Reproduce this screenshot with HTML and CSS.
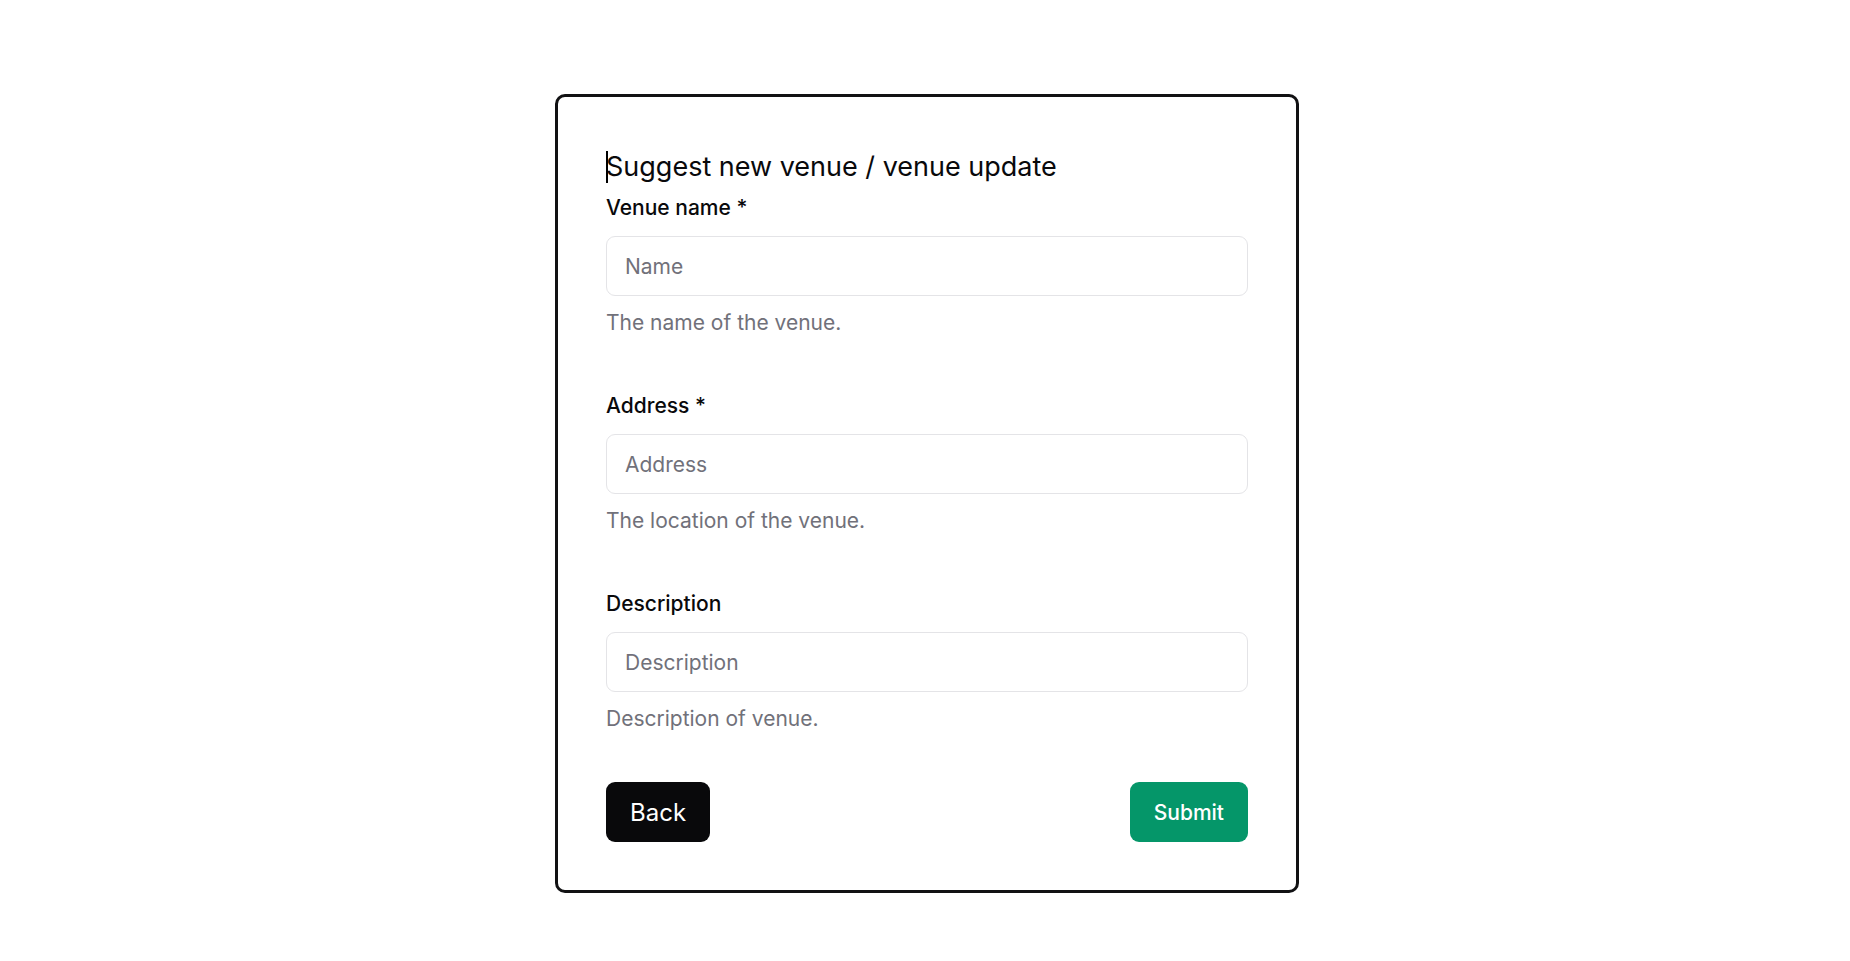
FILE: index.html
```html
<!DOCTYPE html>
<html lang="en">
<head>
<meta charset="utf-8">
<title>Suggest new venue</title>
<link rel="stylesheet" href="styles.css">
</head>
<body>
<main class="page">
  <form class="card">
    <h1 class="title">Suggest new venue / venue update</h1>
    <div class="fields">
      <div class="field">
        <label class="label" for="name">Venue name *</label>
        <input class="input" id="name" type="text" placeholder="Name">
        <p class="helper">The name of the venue.</p>
      </div>
      <div class="field">
        <label class="label" for="address">Address *</label>
        <input class="input" id="address" type="text" placeholder="Address">
        <p class="helper">The location of the venue.</p>
      </div>
      <div class="field">
        <label class="label" for="description">Description</label>
        <input class="input" id="description" type="text" placeholder="Description">
        <p class="helper">Description of venue.</p>
      </div>
    </div>
    <div class="actions">
      <button class="btn btn-back" type="button">Back</button>
      <button class="btn btn-submit" type="submit">Submit</button>
    </div>
  </form>
</main>
</body>
</html>
```

FILE: styles.css
```css
html, body {
  margin: 0;
  background: #ffffff;
}

body {
  font-family: Inter, "Noto Sans", "Liberation Sans", sans-serif;
  color: #09090b;
}

.page {
  display: flex;
  justify-content: center;
  padding: 94px 0 0 4px;
}

.card {
  width: 744px;
  box-sizing: border-box;
  border: 3px solid #111113;
  border-radius: 10px;
  padding: 49px 48px 48px;
  background: #ffffff;
}

.title {
  position: relative;
  margin: 0 0 4px;
  font-size: 27px;
  line-height: 42px;
  font-weight: 400;
  color: #09090b;
}

.title::before {
  content: "";
  position: absolute;
  left: 0;
  top: 5px;
  width: 2px;
  height: 32px;
  background: #000000;
}

.fields {
  display: flex;
  flex-direction: column;
  gap: 52px;
}

.field {
  display: flex;
  flex-direction: column;
}

.label {
  font-size: 21px;
  line-height: 30px;
  font-weight: 500;
  color: #09090b;
  padding-top: 1px;
  margin-bottom: 13px;
}

.input {
  display: block;
  width: 100%;
  height: 60px;
  box-sizing: border-box;
  border: 1px solid #e4e4e7;
  border-radius: 9px;
  padding: 0 18px;
  font-family: inherit;
  font-size: 21px;
  color: #09090b;
  background: #ffffff;
  outline: none;
}

.input::placeholder {
  color: #71717a;
}

.helper {
  margin: 12px 0 0;
  font-size: 21px;
  line-height: 30px;
  color: #71717a;
}

.actions {
  display: flex;
  justify-content: space-between;
  margin-top: 48px;
}

.btn {
  height: 60px;
  padding: 0 24px;
  border: none;
  border-radius: 9px;
  font-family: inherit;
  color: #ffffff;
  cursor: pointer;
}

.btn-back {
  background: #09090b;
  font-size: 24px;
  font-weight: 400;
}

.btn-submit {
  background: #059669;
  font-size: 21px;
  font-weight: 500;
}
```
